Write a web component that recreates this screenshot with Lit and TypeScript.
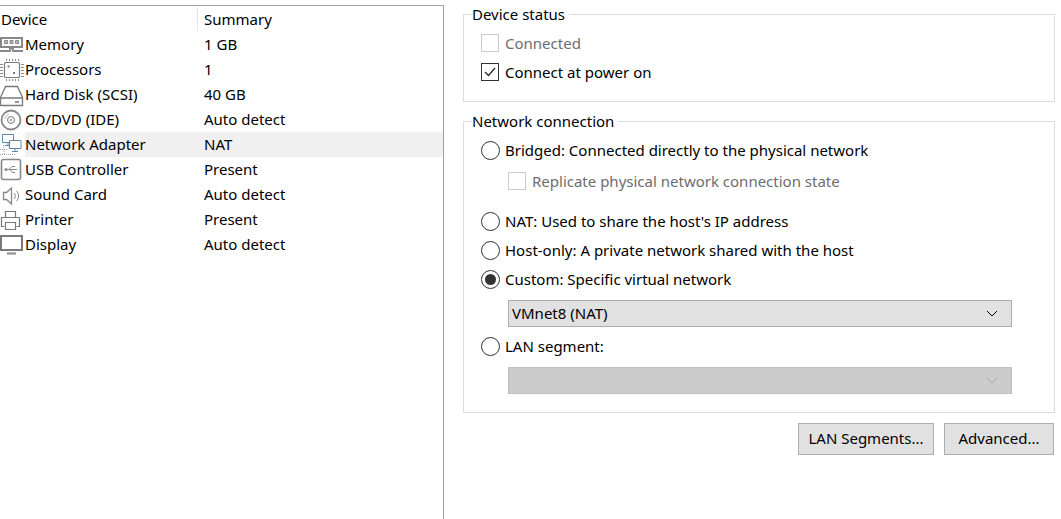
import { LitElement, html, css, svg } from 'lit';
import { customElement } from 'lit/decorators.js';

const icons: Record<string, unknown> = {
  memory: svg`<path d="M1 5h21v9H1z" stroke="#888" stroke-width="2"/><path d="M4.500 7.500h3v3h-3zM10 7.500h3v3h-3zM15.500 7.500h3v3h-3z" fill="#bbb" stroke="#888"/><path d="M0 18h10v-2.500h3v2.500h10" stroke="#888" stroke-width="1.800"/>`,
  cpu: svg`<rect x="4.500" y="4.500" width="15" height="15" rx="1" stroke-width="1.200"/><path d="M7.500 8.500h2M14 14v2" stroke-width="2"/><path d="M6.500 1v2M9.500 1v2M12.500 1v2M15.500 1v2M18.500 1v2M6.500 21v2M9.500 21v2M12.500 21v2M15.500 21v2M18.500 21v2M0 6.500h3M0 9.500h3M0 12.500h3M0 15.500h3M0 18.500h3M21 6.500h3M21 9.500h3M21 12.500h3M21 15.500h3M21 18.500h3" stroke="#888"/>`,
  disk: svg`<path d="M5.500 3.500h12l5 11v8h-22v-8zM0.500 15h22" stroke-width="1.300"/><path d="M15 19h4" stroke-width="1.600"/>`,
  cd: svg`<circle cx="11" cy="12" r="9.500" stroke="#888" stroke-width="1.800"/><circle cx="11" cy="12" r="3.500" stroke="#777"/><circle cx="11" cy="12" r="1" stroke="#999"/><path d="M5 11a6 6 0 0 1 4-5" stroke="#bbb"/>`,
  net: svg`<g stroke="#5f86a8"><path d="M2.500 1.500h11v8h-11zM8 9.500v3M5 12.500h6"/><path d="M9.500 7.500h11.500v8H9.500zM15 15.500v3M12 18.500h6" fill="#fff"/></g><path d="M0 16.500h8M4 12v9M0 21.500h15" stroke="#9a9a9a" stroke-dasharray="1 1"/>`,
  usb: svg`<rect x="1.500" y="1.500" width="19" height="20" rx="2" stroke="#888" stroke-width="1.600"/><path d="M6 11.500h11M9 11.500l3-3h3M10 11.500l2.500 3h2.500" stroke="#888"/><circle cx="6" cy="11.500" r="1.500" fill="#888" stroke="none"/>`,
  sound: svg`<path d="M3.500 9.500h3l5-4.500v16l-5-4.500h-3z" stroke="#888" stroke-width="1.300"/><path d="M14 10a4 4 0 0 1 0 6M16.500 8a7 7 0 0 1 0 10" stroke="#888"/>`,
  printer: svg`<path d="M5.500 9.500v-6h10v6M4.500 18.500h-3v-9h18v9h-3" stroke-width="1.200"/><path d="M5.500 14.500h10v7h-10z" stroke-width="1.200"/>`,
  display: svg`<rect x="1" y="3" width="21" height="14" stroke-width="2"/><path d="M7 20.500h9" stroke="#999" stroke-width="2.400"/>`,
};

const devices = [
  ['memory', 'Memory', '1 GB'],
  ['cpu', 'Processors', '1'],
  ['disk', 'Hard Disk (SCSI)', '40 GB'],
  ['cd', 'CD/DVD (IDE)', 'Auto detect'],
  ['net', 'Network Adapter', 'NAT'],
  ['usb', 'USB Controller', 'Present'],
  ['sound', 'Sound Card', 'Auto detect'],
  ['printer', 'Printer', 'Present'],
  ['display', 'Display', 'Auto detect'],
];

const chevron = svg`<svg class="chev" width="12" height="7" viewBox="0 0 12 7"><path d="M1 1l5 5 5-5" fill="none" stroke="currentColor"/></svg>`;

@customElement('app-root')
export class AppRoot extends LitElement {
  static styles = css`
    :host {
      display: flex;
      width: 1061px;
      height: 519px;
      overflow: hidden;
      background: #fff;
      color: #000;
      font-family: 'Noto Sans', 'Open Sans', sans-serif;
      font-size: 15px;
      line-height: 20px;
    }
    .list {
      box-sizing: border-box;
      width: 444px;
      height: 514px;
      margin-top: 5px;
      border-top: 1px solid #a0a0a0;
      border-right: 1px solid #a0a0a0;
      flex: none;
    }
    .head,
    .row {
      display: grid;
      grid-template-columns: 204px 1fr;
      height: 25px;
      align-items: center;
    }
    .row {
      line-height: 25px;
    }
    .head {
      height: 26px;
      position: relative;
    }
    .head span:first-child {
      padding-left: 1px;
    }
    .divider {
      position: absolute;
      left: 197px;
      top: 1px;
      width: 1px;
      height: 24px;
      background: #e5e5e5;
    }
    .row .name {
      display: flex;
      align-items: center;
      height: 25px;
    }
    .row .name svg {
      width: 24px;
      height: 24px;
      flex: none;
      margin-right: 1px;
      fill: none;
      stroke: #7a7a7a;
      stroke-width: 1;
    }
    .row .name span {
      flex: 1;
      height: 25px;
    }
    .row .value {
      height: 25px;
    }
    .row.selected span,
    .row.selected .value {
      background: #f0f0f0;
    }
    .side {
      margin-left: 19px;
      width: 592px;
      display: flex;
      flex-direction: column;
    }
    fieldset {
      box-sizing: border-box;
      margin: 0;
      min-width: 0;
      border: 1px solid #dcdcdc;
      padding: 0 0 0 17px;
    }
    legend {
      margin-left: -9px;
      padding: 0 4px 0 0;
      line-height: 20px;
    }
    .status {
      height: 98px;
      margin-top: 4px;
    }
    .network {
      height: 302px;
      margin-top: 9px;
    }
    .opt {
      display: flex;
      align-items: center;
      gap: 6px;
      height: 20px;
    }
    .disabled {
      color: #6d6d6d;
    }
    .box {
      box-sizing: border-box;
      width: 18px;
      height: 18px;
      border: 1px solid #333;
      display: flex;
      align-items: center;
      justify-content: center;
      flex: none;
    }
    .disabled .box {
      border-color: #ccc;
    }
    .radio {
      box-sizing: border-box;
      width: 19px;
      height: 19px;
      margin-right: -1px;
      border: 1px solid #333;
      border-radius: 50%;
      flex: none;
      display: flex;
      align-items: center;
      justify-content: center;
    }
    .radio.on::after {
      content: '';
      width: 11px;
      height: 11px;
      border-radius: 50%;
      background: #333;
    }
    .status .first { margin-top: 9px; }
    .status .second { margin-top: 9px; }
    .network .bridged { margin-top: 9px; }
    .network .replicate { margin: 11px 0 0 27px; }
    .network .nat { margin-top: 20px; }
    .network .next { margin-top: 9px; }
    .combo {
      box-sizing: border-box;
      width: 504px;
      height: 27px;
      margin: 11px 0 0 27px;
      padding: 0 13px 1px 3px;
      border: 1px solid #adadad;
      background: #e1e1e1;
      display: flex;
      align-items: center;
      justify-content: space-between;
    }
    .combo.off {
      background: #cccccc;
      border-color: #bfbfbf;
      color: #a5a5a5;
    }
    .buttons {
      display: flex;
      justify-content: flex-end;
      gap: 10px;
      margin-top: 10px;
      padding-right: 1px;
    }
    .btn {
      box-sizing: border-box;
      height: 32px;
      padding-bottom: 2px;
      border: 1px solid #adadad;
      background: #e1e1e1;
      display: flex;
      align-items: center;
      justify-content: center;
    }
    .btn.segments { width: 136px; }
    .btn.advanced { width: 110px; }
  `;

  render() {
    return html`
      <div class="list">
        <div class="head"><span>Device</span><span>Summary</span><i class="divider"></i></div>
        ${devices.map(
          ([icon, name, value]) => html`
            <div class="row ${name === 'Network Adapter' ? 'selected' : ''}">
              <div class="name"><svg viewBox="0 0 24 24">${icons[icon]}</svg><span>${name}</span></div>
              <div class="value">${value}</div>
            </div>
          `,
        )}
      </div>
      <div class="side">
        <fieldset class="status">
          <legend>Device status</legend>
          <div class="opt first disabled"><i class="box"></i>Connected</div>
          <div class="opt second">
            <i class="box"><svg width="12" height="10" viewBox="0 0 12 10"><path d="M1 5l3.500 3.500L11 1" fill="none" stroke="#222" stroke-width="1.200"/></svg></i>Connect at power on
          </div>
        </fieldset>
        <fieldset class="network">
          <legend>Network connection</legend>
          <div class="opt bridged"><i class="radio"></i>Bridged: Connected directly to the physical network</div>
          <div class="opt replicate disabled"><i class="box"></i>Replicate physical network connection state</div>
          <div class="opt nat"><i class="radio"></i>NAT: Used to share the host's IP address</div>
          <div class="opt next"><i class="radio"></i>Host-only: A private network shared with the host</div>
          <div class="opt next"><i class="radio on"></i>Custom: Specific virtual network</div>
          <div class="combo"><span>VMnet8 (NAT)</span>${chevron}</div>
          <div class="opt next"><i class="radio"></i>LAN segment:</div>
          <div class="combo off"><span></span>${chevron}</div>
        </fieldset>
        <div class="buttons">
          <div class="btn segments">LAN Segments...</div>
          <div class="btn advanced">Advanced...</div>
        </div>
      </div>
    `;
  }
}
